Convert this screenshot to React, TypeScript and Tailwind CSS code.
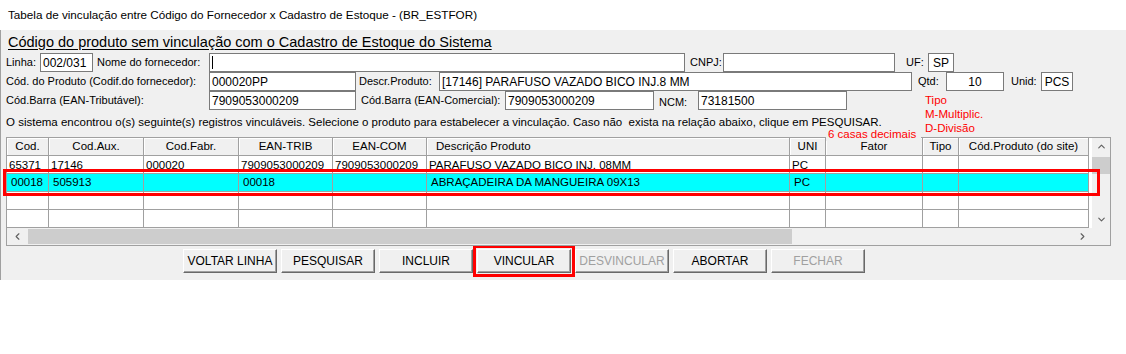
import { ChevronUp, ChevronDown, ChevronLeft, ChevronRight } from 'lucide-react';

const rows: string[][] = [
  ['65371', '17146', '000020', '7909053000209', '7909053000209', 'PARAFUSO VAZADO BICO INJ. 08MM', 'PC', '', '', ''],
  ['00018', '505913', '', '00018', '', 'ABRAÇADEIRA DA MANGUEIRA 09X13', 'PC', '', '', ''],
  ['', '', '', '', '', '', '', '', '', ''],
  ['', '', '', '', '', '', '', '', '', ''],
];

const headers = ['Cod.', 'Cod.Aux.', 'Cod.Fabr.', 'EAN-TRIB', 'EAN-COM', 'Descrição Produto', 'UNI', 'Fator', 'Tipo', 'Cód.Produto (do site)'];

function Field({ className, children }: { className: string; children?: React.ReactNode }) {
  return (
    <div className={`h-[19px] bg-white border border-[#7a7a7a] flex items-center px-[2px] text-[12px] whitespace-nowrap overflow-hidden ${className}`}>
      {children}
    </div>
  );
}

function Label({ className, children }: { className: string; children: React.ReactNode }) {
  return <span className={`text-[11px] whitespace-nowrap ${className}`}>{children}</span>;
}

function Btn({ label, disabled }: { label: string; disabled?: boolean }) {
  return (
    <div
      className={`w-[94px] h-[24px] flex items-center justify-center text-[12px] bg-[#f0f0f0] border border-t-white border-l-white border-r-[#696969] border-b-[#696969] shadow-[inset_-1px_-1px_0_#a0a0a0] ${
        disabled ? 'text-[#a0a0a0]' : 'text-black'
      }`}
    >
      {label}
    </div>
  );
}

export default function App() {
  return (
    <div className="w-[1126px] h-[354px] bg-white text-black font-[Liberation_Sans,Arial,sans-serif]">
      {/* Title */}
      <div className="h-[30px] flex items-center pl-[8px] text-[11.7px]">
        Tabela de vinculação entre Código do Fornecedor x Cadastro de Estoque - (BR_ESTFOR)
      </div>

      {/* Form panel */}
      <div className="h-[250px] bg-[#f0f0f0] border-l border-[#a0a0a0] flex flex-col">
        <div className="h-[23px] flex items-center pl-[7px] pt-[3px] text-[14.5px] underline underline-offset-2">
          Código do produto sem vinculação com o Cadastro de Estoque do Sistema
        </div>

        {/* Row 1 */}
        <div className="h-[19px] flex items-center">
          <Label className="ml-[5px] w-[34px]">Linha:</Label>
          <Field className="w-[53px]">002/031</Field>
          <Label className="ml-[4px] w-[112px]">Nome do fornecedor:</Label>
          <Field className="w-[476px]">
            <span className="w-px h-[13px] bg-black" />
          </Field>
          <Label className="ml-[5px] w-[33px]">CNPJ:</Label>
          <Field className="w-[172px]" />
          <Label className="ml-[11px] w-[22px]">UF:</Label>
          <Field className="w-[26px] justify-center">SP</Field>
        </div>

        {/* Row 2 */}
        <div className="h-[19px] flex items-center">
          <Label className="ml-[5px] w-[203px]">Cód. do Produto (Codif.do fornecedor):</Label>
          <Field className="w-[147px]">000020PP</Field>
          <Label className="ml-[3px] w-[80px]">Descr.Produto:</Label>
          <Field className="w-[473px]">[17146] PARAFUSO VAZADO BICO INJ.8 MM</Field>
          <Label className="ml-[6px] w-[28px]">Qtd:</Label>
          <Field className="w-[58px] justify-center">10</Field>
          <Label className="ml-[7px] w-[30px]">Unid:</Label>
          <Field className="w-[32px] justify-center">PCS</Field>
        </div>

        {/* Row 3 + message, with the red legend on the right */}
        <div className="flex">
          <div className="w-[924px] flex flex-col">
            <div className="h-[19px] flex items-center">
              <Label className="ml-[5px] w-[203px]">Cód.Barra (EAN-Tributável):</Label>
              <Field className="w-[147px]">7909053000209</Field>
              <Label className="ml-[5px] w-[144px]">Cód.Barra (EAN-Comercial):</Label>
              <Field className="w-[149px]">7909053000209</Field>
              <Label className="ml-[5px] w-[39px] pt-[4px]">NCM:</Label>
              <Field className="w-[149px]">73181500</Field>
            </div>
            <div className="h-[27px] pt-[5px] pl-[5px] text-[11.5px] leading-[14px] whitespace-nowrap">
              O sistema encontrou o(s) seguinte(s) registros vinculáveis. Selecione o produto para estabelecer a vinculação. Caso não&nbsp; exista na relação abaixo, clique em PESQUISAR.
            </div>
          </div>
          <div className="pt-[2px] text-[11.5px] leading-[14px] text-[#ff0000] whitespace-nowrap">
            <div>Tipo</div>
            <div>M-Multiplic.</div>
            <div>D-Divisão</div>
          </div>
        </div>

        {/* Grid */}
        <div className="relative ml-[5px] w-[1105px] border border-[#a0a0a0] bg-white flex flex-col">
          <div className="flex">
            <div className="flex flex-col w-[1082px]">
              <div className="grid grid-cols-[42px_95px_95px_94px_94px_363px_36px_97px_36px_130px] h-[18px] text-[11.5px]">
                {headers.map((h, i) => (
                  <div
                    key={h}
                    className={`flex items-center bg-[#f0f0f0] border-r border-b border-[#a0a0a0] shadow-[inset_1px_1px_0_#ffffff] whitespace-nowrap overflow-hidden ${
                      i === 5 ? 'pl-[9px]' : 'justify-center'
                    }`}
                  >
                    {h}
                  </div>
                ))}
              </div>
              {rows.map((r, ri) => (
                <div
                  key={ri}
                  className={`grid grid-cols-[42px_95px_95px_94px_94px_363px_36px_97px_36px_130px] h-[18px] text-[11.5px] ${
                    ri === 1 ? 'bg-[#00ffff]' : 'bg-white'
                  }`}
                >
                  {r.map((c, ci) => (
                    <div
                      key={ci}
                      className={`flex items-center border-r border-b border-[#a0a0a0] whitespace-nowrap overflow-hidden ${
                        ri === 1 ? 'pl-[4px]' : ri === 0 ? 'pl-[2px] pt-[3px]' : 'pl-[2px]'
                      }`}
                    >
                      {c}
                    </div>
                  ))}
                </div>
              ))}
            </div>
            <div className="w-[3px] bg-white" />
            <div className="w-[18px] bg-[#f0f0f0] flex flex-col text-[#606060]">
              <div className="h-[17px] flex items-center justify-center">
                <ChevronUp size={11} strokeWidth={2.5} />
              </div>
              <div className="mt-[2px] h-[17px] bg-[#cdcdcd]" />
              <div className="flex-1" />
              <div className="h-[17px] flex items-center justify-center">
                <ChevronDown size={11} strokeWidth={2.5} />
              </div>
            </div>
          </div>
          <div className="flex h-[17px] bg-[#f0f0f0] text-[#606060]">
            <div className="w-[20px] flex items-center justify-center">
              <ChevronLeft size={11} strokeWidth={2.5} />
            </div>
            <div className="ml-[1px] mt-[1px] w-[764px] h-[15px] bg-[#cdcdcd]" />
            <div className="flex-1" />
            <div className="w-[20px] flex items-center justify-center">
              <ChevronRight size={11} strokeWidth={2.5} />
            </div>
            <div className="w-[18px]" />
          </div>

          {/* red annotation around the selected row */}
          <div className="absolute left-[-4px] top-[31px] w-[1097px] h-[27px] border-[3px] border-[#ff0000]" />

          {/* legend sitting over the top border */}
          <div className="absolute left-[819px] top-[-10px] w-[95px] h-[13px] bg-[#f0f0f0] pl-[2px] text-[11.5px] leading-[13px] text-[#ff0000] whitespace-nowrap">
            6 casas decimais
          </div>
        </div>

        {/* Buttons */}
        <div className="mt-[3px] ml-[182px] flex gap-[4px]">
          <Btn label="VOLTAR LINHA" />
          <Btn label="PESQUISAR" />
          <Btn label="INCLUIR" />
          <div className="-m-[4px] border-[3px] border-[#ff0000] p-px">
            <Btn label="VINCULAR" />
          </div>
          <Btn label="DESVINCULAR" disabled />
          <Btn label="ABORTAR" />
          <Btn label="FECHAR" disabled />
        </div>
      </div>
    </div>
  );
}
